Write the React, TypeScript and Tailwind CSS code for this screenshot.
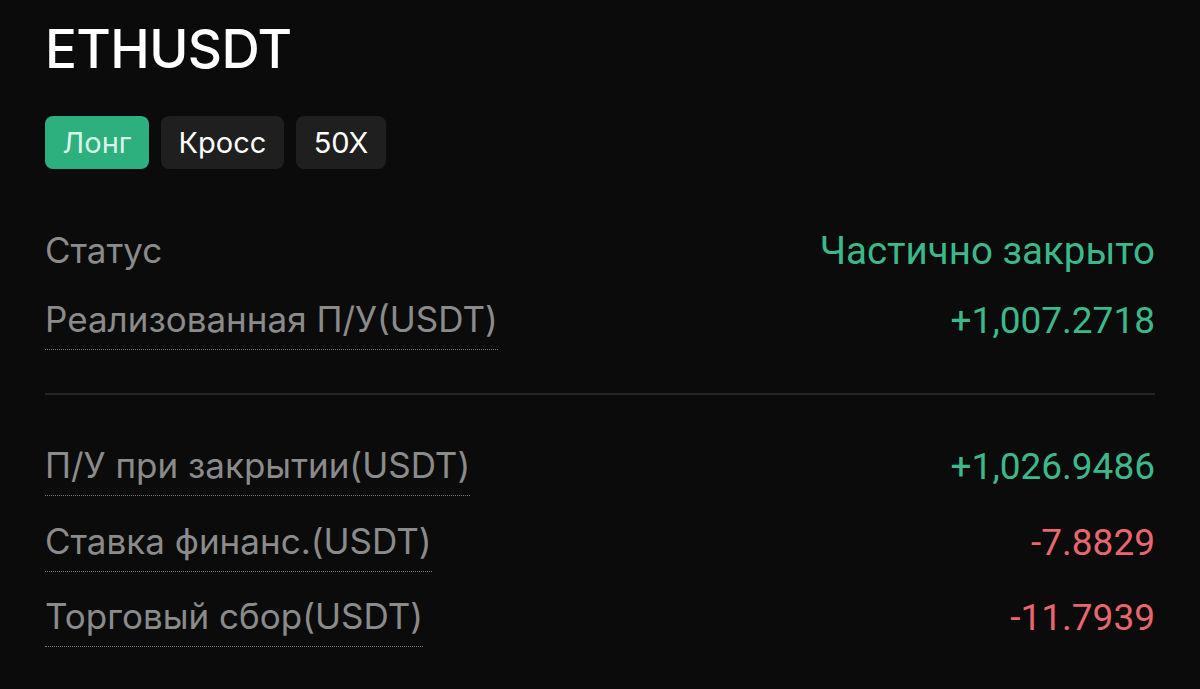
const label = "font-['Inter',sans-serif] text-[35px] leading-none text-[#8b8b8b]";
const num = "font-['Roboto',sans-serif] text-[37px] leading-none";

const Row = ({ title, value, color, dotted = true, className = '', valueClass = '' }: { title: string; value: string; color: string; dotted?: boolean; className?: string; valueClass?: string }) => (
  <div className={`flex items-start justify-between ${className}`}>
    <span className={`${label} pb-[12px] ${dotted ? 'border-b border-dotted border-[#7a7a7a]' : ''}`}>{title}</span>
    <span className={`${num} ${color} ${valueClass}`}>{value}</span>
  </div>
);

export default function App() {
  return (
    <div className="w-[1200px] h-[689px] bg-[#0b0b0b] px-[45px] pt-[23px] overflow-hidden">
      <h1 className="font-['Inter',sans-serif] text-[53px] leading-none font-medium text-white tracking-[-0.6px]">ETHUSDT</h1>

      <div className="flex gap-3 mt-[40px] font-['Inter',sans-serif] text-[29px]">
        <span className="h-[53px] w-[104px] flex items-center justify-center rounded-lg bg-[#2daf7e] text-[#d9f5e9]">Лонг</span>
        <span className="h-[53px] w-[123px] flex items-center justify-center rounded-lg bg-[#1f1f1f] text-white">Кросс</span>
        <span className="h-[53px] w-[90px] flex items-center justify-center rounded-lg bg-[#1f1f1f] text-white">50X</span>
      </div>

      <Row title="Статус" value="Частично закрыто" color="text-[#3bb98a]" dotted={false} className="mt-[64px]" valueClass="text-[38.5px] -mt-[1px]" />
      <Row title="Реализованная П/У(USDT)" value="+1,007.2718" color="text-[#3bb98a]" className="mt-[22px]" />

      <div className="mt-[43px] h-[2px] bg-[#262626]" />

      <Row title="П/У при закрытии(USDT)" value="+1,026.9486" color="text-[#3bb98a]" className="mt-[53px]" />
      <Row title="Ставка финанс.(USDT)" value="-7.8829" color="text-[#e8666e]" className="mt-[28px]" />
      <Row title="Торговый сбор(USDT)" value="-11.7939" color="text-[#e8666e]" className="mt-[27px]" />
    </div>
  );
}
